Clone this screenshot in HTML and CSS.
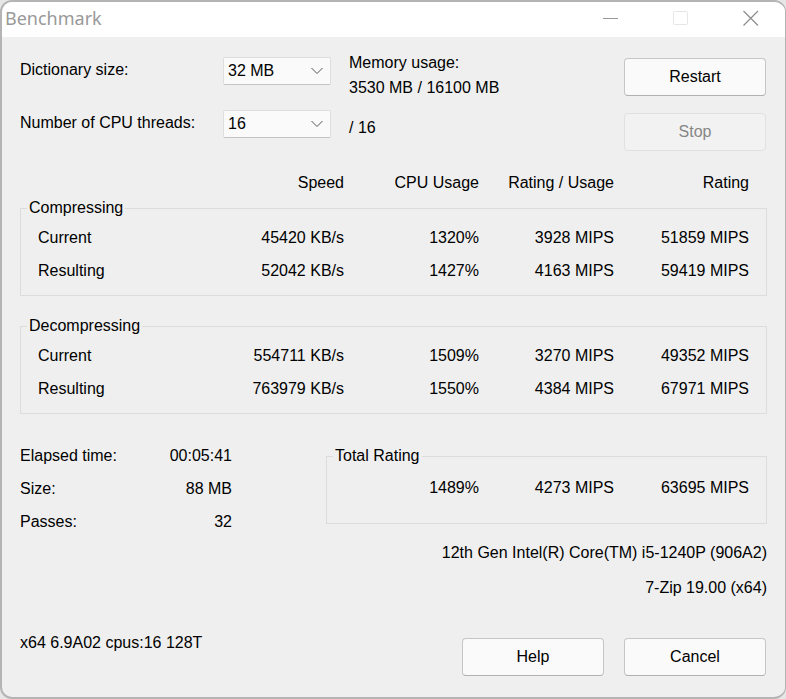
FILE: index.html
```html
<!DOCTYPE html>
<html lang="en">
<head>
<meta charset="utf-8">
<meta name="viewport" content="width=device-width, initial-scale=1">
<title>Benchmark</title>
<link rel="stylesheet" href="styles.css">
</head>
<body>
<div class="window">
  <header class="titlebar">
    <h1 class="title">Benchmark</h1>
    <div class="caption-buttons">
      <button class="caption-button" type="button" aria-label="Minimize">
        <svg width="16" height="16" viewBox="0 0 16 16"><path d="M0 8.500H15" stroke="#999"/></svg>
      </button>
      <button class="caption-button" type="button" aria-label="Maximize" disabled>
        <svg width="16" height="16" viewBox="0 0 16 16"><rect x="0.500" y="1.500" width="14" height="13" rx="1" stroke="#e6e6e6"/></svg>
      </button>
      <button class="caption-button" type="button" aria-label="Close">
        <svg width="16" height="16" viewBox="0 0 16 16"><path d="M0.500 1L15 15.500M15 1L0.500 15.500" stroke="#8c8c8c" stroke-width="1.200"/></svg>
      </button>
    </div>
  </header>
  <main class="content">
    <section class="top">
      <div class="settings">
        <label for="dictionary">Dictionary size:</label>
        <div class="combo">
          <select id="dictionary"><option>32 MB</option></select>
          <svg class="chevron" width="12" height="8" viewBox="0 0 12 8"><path d="M0.500 1L6 6.500L11.500 1"/></svg>
        </div>
        <label for="threads">Number of CPU threads:</label>
        <div class="combo">
          <select id="threads"><option>16</option></select>
          <svg class="chevron" width="12" height="8" viewBox="0 0 12 8"><path d="M0.500 1L6 6.500L11.500 1"/></svg>
        </div>
      </div>
      <div class="memory">
        <div>Memory usage:</div>
        <div>3530 MB / 16100 MB</div>
        <div class="max-threads">/ 16</div>
      </div>
      <div class="actions">
        <button class="button" type="button">Restart</button>
        <button class="button" type="button" disabled>Stop</button>
      </div>
    </section>

    <div class="headings">
      <table class="results">
        <thead><tr><td class="name"></td><th>Speed</th><th class="metric">CPU Usage</th><th class="metric">Rating / Usage</th><th class="metric">Rating</th></tr></thead>
      </table>
    </div>
    <fieldset class="group">
      <legend>Compressing</legend>
      <table class="results">
        <tbody>
          <tr><th class="name">Current</th><td>45420 KB/s</td><td class="metric">1320%</td><td class="metric">3928 MIPS</td><td class="metric">51859 MIPS</td></tr>
          <tr><th class="name">Resulting</th><td>52042 KB/s</td><td class="metric">1427%</td><td class="metric">4163 MIPS</td><td class="metric">59419 MIPS</td></tr>
        </tbody>
      </table>
    </fieldset>
    <fieldset class="group">
      <legend>Decompressing</legend>
      <table class="results">
        <tbody>
          <tr><th class="name">Current</th><td>554711 KB/s</td><td class="metric">1509%</td><td class="metric">3270 MIPS</td><td class="metric">49352 MIPS</td></tr>
          <tr><th class="name">Resulting</th><td>763979 KB/s</td><td class="metric">1550%</td><td class="metric">4384 MIPS</td><td class="metric">67971 MIPS</td></tr>
        </tbody>
      </table>
    </fieldset>

    <section class="summary">
      <table class="results stats">
        <tbody>
          <tr><th class="name">Elapsed time:</th><td>00:05:41</td></tr>
          <tr><th class="name">Size:</th><td>88 MB</td></tr>
          <tr><th class="name">Passes:</th><td>32</td></tr>
        </tbody>
      </table>
      <fieldset class="group total">
        <legend>Total Rating</legend>
        <table class="results">
          <tbody><tr><td>1489%</td><td>4273 MIPS</td><td>63695 MIPS</td></tr></tbody>
        </table>
      </fieldset>
    </section>

    <div class="system">
      <div>12th Gen Intel(R) Core(TM) i5-1240P (906A2)</div>
      <div>7-Zip 19.00 (x64)</div>
    </div>

    <footer class="footer">
      <div class="cpu-info">x64 6.9A02 cpus:16 128T</div>
      <button class="button" type="button">Help</button>
      <button class="button" type="button">Cancel</button>
    </footer>
  </main>
</div>
</body>
</html>
```
FILE: styles.css
```css
* {
  box-sizing: border-box;
}

body {
  margin: 0;
  background: #e6e6e6;
  color: #000;
  font: 16px/20px "Liberation Sans", Arial, sans-serif;
}

button,
select {
  font: inherit;
  color: inherit;
}

.window {
  display: flex;
  flex-direction: column;
  min-height: 100vh;
  border: 2px solid #b4b4b4;
  border-right-width: 1px;
  border-radius: 12px;
  background: #efefef;
  overflow: hidden;
}

.titlebar {
  display: flex;
  align-items: center;
  justify-content: space-between;
  height: 35px;
  padding: 0 26px 3px 3px;
  background: #fff;
}

.title {
  margin: 0;
  color: #999;
  font: 18px/24px "Noto Sans", "Segoe UI", sans-serif;
}

.caption-buttons {
  display: flex;
  gap: 54px;
}

.caption-button {
  display: flex;
  padding: 0;
  border: 0;
  background: none;
}

.caption-button svg {
  fill: none;
}

.content {
  padding: 8px 18px 21px;
}

.top {
  display: flex;
  gap: 18px;
}

.settings {
  display: grid;
  grid-template-columns: 203px 108px;
  grid-auto-rows: 53px;
  align-items: center;
  margin-top: -1px;
}

.settings label {
  padding-bottom: 2px;
}

.combo {
  position: relative;
}

.combo select {
  display: block;
  width: 100%;
  height: 28px;
  padding: 0 4px;
  border: 1px solid #dedede;
  border-bottom-color: #c4c4c4;
  border-radius: 2px;
  background: #fafafa;
  appearance: none;
}

.chevron {
  position: absolute;
  top: 10px;
  right: 8px;
  fill: none;
  stroke: #555;
  pointer-events: none;
}

.memory {
  flex: 1;
  padding-top: 5px;
  line-height: 25px;
}

.max-threads {
  margin-top: 15px;
}

.actions {
  display: flex;
  flex-direction: column;
  gap: 17px;
  padding: 13px 1px 15px 0;
}

.button {
  width: 142px;
  height: 38px;
  padding: 0;
  border: 1px solid #c6c6c6;
  border-bottom-color: #b0b0b0;
  border-radius: 4px;
  background: #fafafa;
}

.button:disabled {
  border-color: #e0e0e0;
  background: #f2f2f2;
  color: #868686;
}

.results {
  width: 100%;
  border-collapse: collapse;
  table-layout: fixed;
}

.results th,
.results td {
  height: 33px;
  padding: 0;
  font-weight: 400;
  text-align: right;
  white-space: nowrap;
}

.results .name {
  width: 120px;
  text-align: left;
}

.results .metric {
  width: 135px;
}

.headings {
  padding: 0 18px;
}

.headings + .group {
  margin-top: -1px;
}

.group {
  min-width: 0;
  margin: 20px 0 0;
  padding: 3px 17px 8px;
  border: 1px solid #dcdcdc;
}

.group legend {
  margin-left: -11px;
  padding: 0 2px;
}

.summary {
  display: grid;
  grid-template-columns: 212px 1fr;
  column-gap: 94px;
  align-items: start;
  margin-top: 25px;
}

.group.total {
  margin-top: 7px;
  padding: 5px 17px 19px;
}

.system {
  margin-top: -3px;
  line-height: 35px;
  text-align: right;
}

.footer {
  display: flex;
  gap: 20px;
  margin-top: 33px;
  padding-right: 1px;
}

.cpu-info {
  flex: 1;
  line-height: 10px;
}
```
